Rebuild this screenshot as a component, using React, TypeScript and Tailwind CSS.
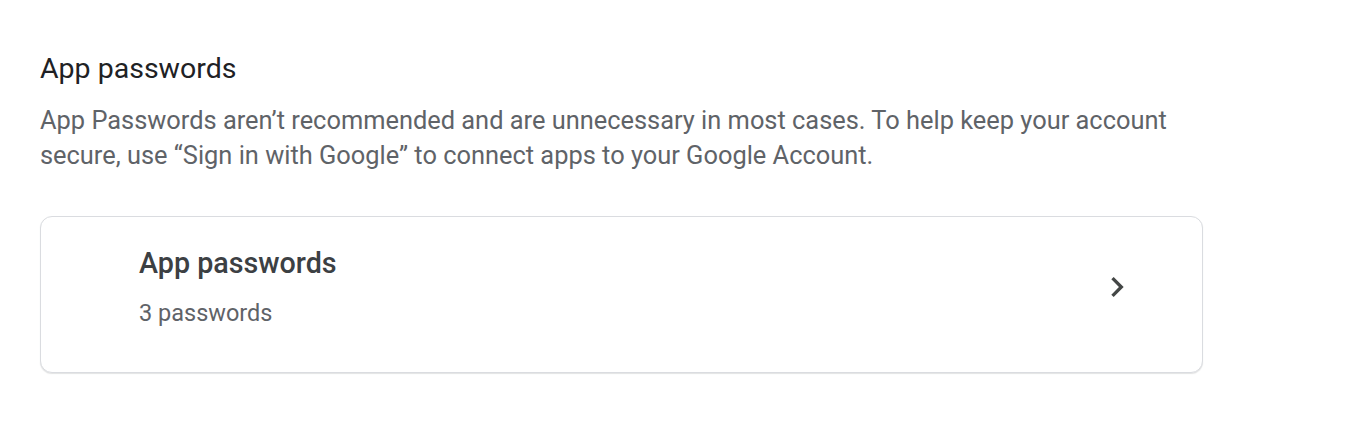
export default function App() {
  return (
    <div className="min-h-[438px] w-[1360px] bg-white font-['Roboto',sans-serif]">
      <div className="w-[1203px] pl-10 pt-[51px]">
        <h2 className="text-[28.5px] leading-[36px] text-[#202124]">App passwords</h2>
        <p className="mt-[16px] text-[25.4px] leading-[35px] text-[#5f6368]">
          App Passwords aren’t recommended and are unnecessary in most cases. To help keep your account
          secure, use “Sign in with Google” to connect apps to your Google Account.
        </p>

        <button className="mt-[43px] flex h-[157px] w-full items-start rounded-[12px] border border-[#dadce0] bg-white pl-[98px] pr-[65px] text-left shadow-[0_1px_1px_rgba(60,64,67,0.15)]">
          <div className="flex-1 pt-[28px]">
            <div className="text-[28.7px] font-medium leading-[36px] text-[#3c4043]">App passwords</div>
            <div className="mt-[16px] text-[23.5px] leading-[32px] text-[#5f6368]">3 passwords</div>
          </div>
          <svg viewBox="0 0 24 24" className="mt-[50px] size-[40px] fill-[#444746]">
            <path d="M10 6 8.59 7.41 13.17 12l-4.58 4.59L10 18l6-6z" />
          </svg>
        </button>
      </div>
    </div>
  );
}
